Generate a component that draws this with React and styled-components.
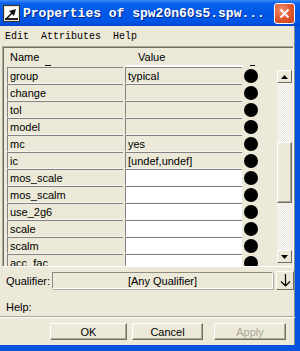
import React from "react";
import styled, { createGlobalStyle } from "styled-components";

const Global = createGlobalStyle`
  html, body { margin: 0; padding: 0; background: #ece9d8; overflow: hidden; }
  * { box-sizing: border-box; }
`;

const Window = styled.div`
  width: 300px;
  height: 351px;
  display: flex;
  flex-direction: column;
  background: #ece9d8;
  font-family: "Liberation Sans", Arial, sans-serif;
  font-size: 11px;
  color: #000;
  overflow: hidden;
`;

const TitleBar = styled.div`
  height: 26px;
  flex: none;
  display: flex;
  align-items: center;
  padding: 0 5px 0 3px;
  gap: 2px;
  background: linear-gradient(#3c8cf8 0%, #0a62ea 12%, #0058e8 45%, #0055e4 85%, #0044cc 100%);
`;

const Title = styled.div`
  flex: 1;
  color: #fff;
  font-family: "Liberation Mono", "Courier New", monospace;
  font-weight: bold;
  font-size: 13px;
  white-space: nowrap;
  overflow: hidden;
  padding-left: 1px;
  text-shadow: 1px 1px 0 #0a2a8a;
`;

const CloseBtn = styled.div`
  width: 21px;
  height: 21px;
  border: 1px solid #fff;
  border-radius: 3px;
  background: radial-gradient(circle at 35% 30%, #f08f6e 0%, #e0582f 50%, #c9421c 100%);
  display: flex;
  align-items: center;
  justify-content: center;
`;

const Body = styled.div`
  flex: 1;
  display: flex;
  flex-direction: column;
  border-right: 5px solid #0852e0;
  border-bottom: 6px solid #0852e0;
  box-shadow: inset -1px 0 0 #888;
`;

const MenuBar = styled.div`
  height: 19px;
  flex: none;
  display: flex;
  align-items: center;
  padding: 2px 0 0 5px;
  font-family: "Liberation Mono", "Courier New", monospace;
  font-size: 10px;
  white-space: pre;
`;

const Panel = styled.div`
  margin: 1px 1px 0 2px;
  height: 221px;
  flex: none;
  display: flex;
  border-top: 1px solid #aca899;
  border-left: 1px solid #aca899;
  border-right: 1px solid #fff;
  border-bottom: 1px solid #fff;
  box-shadow: inset 1px 1px 0 #716f64;
  overflow: hidden;
`;

const TableArea = styled.div`
  flex: none;
  width: 271px;
  padding-left: 4px;
  display: flex;
  flex-direction: column;
`;

const HeaderRow = styled.div`
  height: 20px;
  flex: none;
  display: grid;
  grid-template-columns: 117px 117px 14px;
  gap: 0 2px;
  align-items: end;
`;

const HeaderCell = styled.div`
  position: relative;
  height: 100%;
  padding: 4px 0 0 ${(p) => p.$pad}px;
  ${(p) => (p.$white ? "border-bottom: 2px solid #fff;" : "")}
`;

const SortMark = styled.span`
  position: absolute;
  left: ${(p) => p.$left}px;
  bottom: 1px;
  width: ${(p) => p.$w}px;
  height: 1px;
  background: #000;
`;

const Row = styled.div`
  height: 17px;
  flex: none;
  display: grid;
  grid-template-columns: 116px 117px 14px;
  gap: 0 2px;
  align-items: center;
`;

const Cell = styled.div`
  height: 17px;
  line-height: 16px;
  padding-left: 2px;
  white-space: nowrap;
  overflow: hidden;
  background: ${(p) => (p.$white ? "#fff" : "#ece9d8")};
  border-top: 1px solid #848284;
  border-left: 1px solid #848284;
  border-bottom: 1px solid #f4f3ee;
`;

const Dot = styled.div`
  width: 14px;
  height: 14px;
  border-radius: 50%;
  background: #000;
`;

const ScrollBar = styled.div`
  margin: 23px 0 0 3px;
  width: 15px;
  height: 193px;
  display: flex;
  flex-direction: column;
  background: repeating-conic-gradient(#fcfcfa 0 25%, #e8e6dc 0 50%) 0 0 / 2px 2px;
`;

const ScrollBtn = styled.div`
  height: 13px;
  flex: none;
  background: #ece9d8;
  border-top: 1px solid #fff;
  border-left: 1px solid #fff;
  border-right: 1px solid #716f64;
  border-bottom: 1px solid #716f64;
  display: flex;
  align-items: center;
  justify-content: center;
`;

const Track = styled.div`
  height: ${(p) => p.$h}px;
  flex: none;
`;

const Thumb = styled.div`
  height: 61px;
  flex: none;
  background: #ece9d8;
  border-top: 1px solid #fff;
  border-left: 1px solid #fff;
  border-right: 1px solid #716f64;
  border-bottom: 1px solid #716f64;
  box-shadow: inset -1px -1px 0 #aca899;
`;

const QualRow = styled.div`
  height: 19px;
  margin-top: 4px;
  flex: none;
  display: flex;
  align-items: center;
  padding-left: 6px;
`;

const QualLabel = styled.div`
  width: 46px;
`;

const QualField = styled.div`
  width: 221px;
  height: 17px;
  display: flex;
  align-items: center;
  justify-content: center;
  background: #ece9d8;
  border: 1px solid #8e8c80;
  border-bottom-color: #fff;
  border-right-color: #fff;
  box-shadow: 1px 1px 0 #aca899;
`;

const ArrowBtn = styled.div`
  margin-left: 3px;
  width: 18px;
  height: 19px;
  display: flex;
  align-items: center;
  justify-content: center;
  background: #ece9d8;
  border-top: 1px solid #fff;
  border-left: 1px solid #fff;
  border-right: 1px solid #716f64;
  border-bottom: 1px solid #716f64;
`;

const HelpRow = styled.div`
  height: 26px;
  flex: none;
  display: flex;
  align-items: center;
  padding: 8px 0 0 6px;
`;

const Separator = styled.div`
  height: 2px;
  flex: none;
  border-top: 1px solid #aca899;
  border-bottom: 1px solid #fff;
`;

const ButtonRow = styled.div`
  flex: 1;
  display: flex;
  align-items: flex-start;
  padding: 5px 0 0 50px;
  gap: 5px;
`;

const Button = styled.div`
  width: ${(p) => p.$w}px;
  height: 17px;
  margin-right: ${(p) => p.$mr || 0}px;
  display: flex;
  align-items: center;
  justify-content: center;
  color: ${(p) => (p.$disabled ? "#aca899" : "#000")};
  background: #ece9d8;
  border-top: 1px solid #fff;
  border-left: 1px solid #fff;
  border-right: 1px solid #716f64;
  border-bottom: 1px solid #716f64;
  box-shadow: inset -1px -1px 0 #aca899;
`;

const rows = [
  ["group", "typical", false],
  ["change", "", false],
  ["tol", "", false],
  ["model", "", false],
  ["mc", "yes", false],
  ["ic", "[undef,undef]", false],
  ["mos_scale", "", true],
  ["mos_scalm", "", true],
  ["use_2g6", "", true],
  ["scale", "", true],
  ["scalm", "", true],
  ["acc_fac", "", true],
];

const AppIcon = () => (
  <svg width="17" height="17" viewBox="0 0 17 17">
    <rect x="0.5" y="0.5" width="16" height="16" fill="#e8e4d0" stroke="#333" />
    <rect x="2" y="2" width="13" height="13" fill="#fff" />
    <path d="M3 13 L8 8 L6 6 L13 4 L11 11 L9 9 L5 13 Z" fill="#111" />
    <rect x="2" y="13" width="13" height="2" fill="#222" />
  </svg>
);

export default function App() {
  return (
    <Window>
      <Global />
      <TitleBar>
        <AppIcon />
        <Title>Properties of spw20n60s5.spw...</Title>
        <CloseBtn>
          <svg width="11" height="11" viewBox="0 0 11 11">
            <path d="M1.5 1.5 L9.5 9.5 M9.5 1.5 L1.5 9.5" stroke="#fff" strokeWidth="2" />
          </svg>
        </CloseBtn>
      </TitleBar>
      <Body>
        <MenuBar>{"Edit  Attributes  Help"}</MenuBar>
        <Panel>
          <TableArea>
            <HeaderRow>
              <HeaderCell $pad={3}>
                Name
                <SortMark $left={38} $w={6} />
              </HeaderCell>
              <HeaderCell $pad={12} $white>
                Value
              </HeaderCell>
              <HeaderCell $pad={0}>
                <SortMark $left={5} $w={5} />
              </HeaderCell>
            </HeaderRow>
            {rows.map(([n, v, w]) => (
              <Row key={n}>
                <Cell>{n}</Cell>
                <Cell $white={w}>{v}</Cell>
                <Dot />
              </Row>
            ))}
          </TableArea>
          <ScrollBar>
            <ScrollBtn>
              <svg width="7" height="4" viewBox="0 0 7 4">
                <path d="M3.5 0 L7 4 L0 4 Z" fill="#000" />
              </svg>
            </ScrollBtn>
            <Track $h={59} />
            <Thumb />
            <Track $h={47} />
            <ScrollBtn>
              <svg width="7" height="4" viewBox="0 0 7 4">
                <path d="M0 0 L7 0 L3.5 4 Z" fill="#000" />
              </svg>
            </ScrollBtn>
          </ScrollBar>
        </Panel>
        <QualRow>
          <QualLabel>Qualifier:</QualLabel>
          <QualField>[Any Qualifier]</QualField>
          <ArrowBtn>
            <svg width="11" height="13" viewBox="0 0 11 13">
              <path d="M5.5 0 V12 M1 7.5 L5.5 12 L10 7.5" stroke="#000" strokeWidth="1.2" fill="none" />
            </svg>
          </ArrowBtn>
        </QualRow>
        <HelpRow>Help:</HelpRow>
        <Separator />
        <ButtonRow>
          <Button $w={77}>OK</Button>
          <Button $w={71} $mr={6}>Cancel</Button>
          <Button $w={72} $disabled>Apply</Button>
        </ButtonRow>
      </Body>
    </Window>
  );
}
